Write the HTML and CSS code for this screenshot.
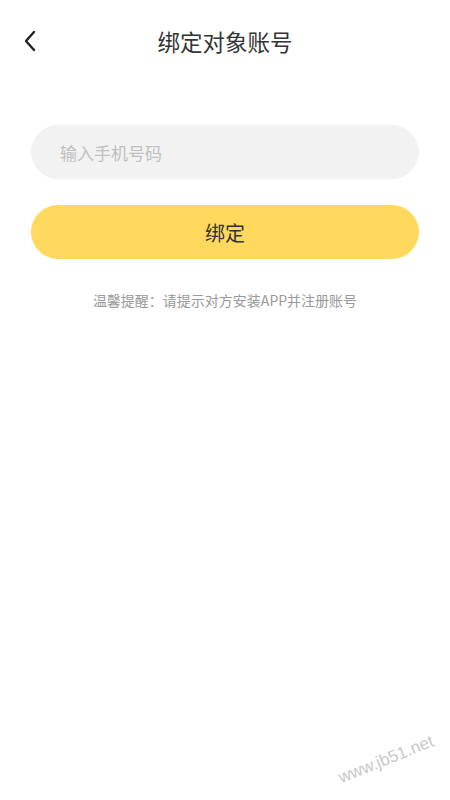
FILE: index.html
```html
<!DOCTYPE html>
<html lang="zh-CN">
<head>
  <meta charset="UTF-8">
  <title>绑定对象账号</title>
  <link rel="stylesheet" href="styles.css">
</head>
<body>
  <div class="page">
    <header class="top-bar">
      <a class="back-btn" href="#">
        <svg width="14" height="22" viewBox="0 0 14 22">
          <path d="M11 2 L3 11 L11 20" fill="none" stroke="#222" stroke-width="2.4" stroke-linecap="round" stroke-linejoin="round"/>
        </svg>
      </a>
      <h1 class="title">绑定对象账号</h1>
    </header>

    <form class="bind-form">
      <input class="phone-input" type="tel" placeholder="输入手机号码">
      <button class="bind-btn" type="button">绑定</button>
      <p class="tip">温馨提醒：请提示对方安装APP并注册账号</p>
    </form>

    <div class="watermark">www.jb51.net</div>
  </div>
</body>
</html>
```

FILE: styles.css
```css
body {
  margin: 0;
  padding: 0;
  background-color: #fff;
  font-family: "Noto Sans CJK SC", "Noto Sans", sans-serif;
  color: #333;
}

.page {
  position: relative;
  height: 800px;
  overflow: hidden;
}

.top-bar {
  position: relative;
  height: 82px;
  display: flex;
  align-items: center;
  justify-content: center;
}

.back-btn {
  position: absolute;
  left: 23px;
  top: 30px;
  display: flex;
}

.title {
  margin: 0;
  font-size: 22.5px;
  font-weight: normal;
  color: #333;
}

.bind-form {
  display: flex;
  flex-direction: column;
  padding: 43px 31px 0 31px;
}

.phone-input {
  height: 54px;
  border: none;
  border-radius: 27px;
  background-color: #f2f2f2;
  padding: 0 29px;
  font-size: 17px;
  font-family: inherit;
  color: #333;
  outline: none;
}

.phone-input::placeholder {
  color: #c0c0c0;
}

.bind-btn {
  margin-top: 26px;
  height: 54px;
  border: none;
  border-radius: 27px;
  background-color: #ffd85e;
  font-size: 20px;
  font-family: inherit;
  color: #333;
  cursor: pointer;
}

.tip {
  margin: 31px 0 0 0;
  text-align: center;
  font-size: 14px;
  color: #999;
}

.watermark {
  position: absolute;
  left: 343px;
  top: 768px;
  font-family: "Liberation Sans", Arial, sans-serif;
  font-size: 17px;
  color: #c8c8c8;
  transform: rotate(-22deg);
  transform-origin: left bottom;
}
```
